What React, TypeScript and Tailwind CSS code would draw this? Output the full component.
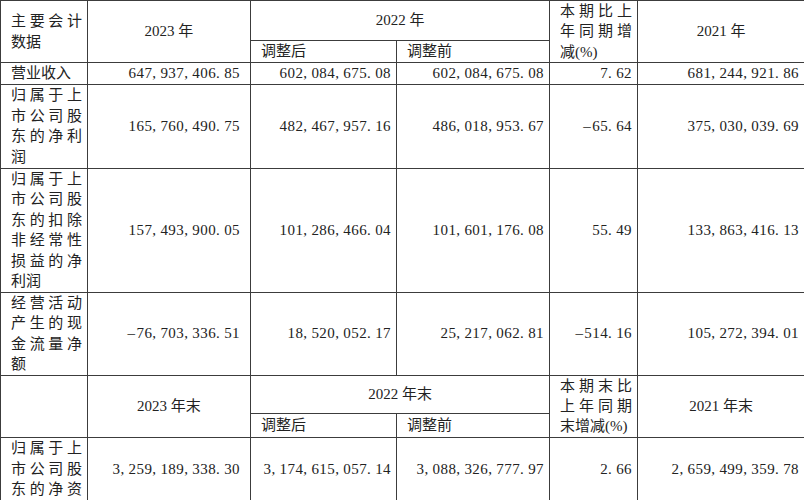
import React from 'react';

const cell = 'border border-[#3c3c3c] p-0 align-middle';

// SimSun-like numbers: digits slightly tracked, punctuation padded to half-width
const Num: React.FC<{ v: string }> = ({ v }) => (
  <span className="tracking-[0.4px]">
    {v.split('').map((c, i) =>
      /[0-9]/.test(c) ? c : c === '-' ? (
        <span key={i} className="inline-block w-[10px] text-center">–</span>
      ) : (
        <span key={i} className="mr-[4px]">{c}</span>
      )
    )}
  </span>
);

// Column labels: full CJK lines spread across the cell, short lines left as they are
const Label: React.FC<{ lines: string[] }> = ({ lines }) => (
  <div>
    {lines.map((l, i) =>
      lines.length > 1 && l.length === 4 && !l.includes('(') ? (
        <div key={i} className="flex justify-between">
          {[...l].map((c, j) => (
            <span key={j}>{c}</span>
          ))}
        </div>
      ) : (
        <div key={i}>{l}</div>
      )
    )}
  </div>
);

const rows = [
  { h: 'h-[21px]', label: ['营业收入'], v: ['647,937,406.85', '602,084,675.08', '602,084,675.08', '7.62', '681,244,921.86'] },
  { h: 'h-[84px]', label: ['归属于上', '市公司股', '东的净利', '润'], v: ['165,760,490.75', '482,467,957.16', '486,018,953.67', '-65.64', '375,030,039.69'] },
  { h: 'h-[124px]', label: ['归属于上', '市公司股', '东的扣除', '非经常性', '损益的净', '利润'], v: ['157,493,900.05', '101,286,466.04', '101,601,176.08', '55.49', '133,863,416.13'] },
  { h: 'h-[83px]', label: ['经营活动', '产生的现', '金流量净', '额'], v: ['-76,703,336.51', '18,520,052.17', '25,217,062.81', '-514.16', '105,272,394.01'] },
];

const DataRow: React.FC<{ h: string; label: string[]; v: string[] }> = ({ h, label, v }) => (
  <tr className={h}>
    <td className={`${cell} pl-[10px] pr-[5px]`}>
      <Label lines={label} />
    </td>
    {v.map((x, i) => (
      <td key={i} className={`${cell} text-right ${i === 0 ? 'pr-[10px]' : 'pr-[5px]'}`}>
        <Num v={x} />
      </td>
    ))}
  </tr>
);

export default function App() {
  return (
    <div className="w-[804px] h-[500px] bg-white overflow-hidden">
      <table className="w-[804px] table-fixed border-collapse text-[15px] leading-[20.4px] text-[#222] font-['Liberation_Serif','Noto_Sans_CJK_SC',serif]">
        <colgroup>
          <col className="w-[87px]" />
          <col className="w-[163px]" />
          <col className="w-[146px]" />
          <col className="w-[153px]" />
          <col className="w-[88px]" />
          <col className="w-[167px]" />
        </colgroup>
        <tbody>
          <tr className="h-[40px]">
            <td rowSpan={2} className={`${cell} pl-[10px] pr-[5px]`}>
              <Label lines={['主要会计', '数据']} />
            </td>
            <td rowSpan={2} className={`${cell} text-center`}>2023 年</td>
            <td colSpan={2} className={`${cell} text-center`}>2022 年</td>
            <td rowSpan={2} className={`${cell} pl-[10px] pr-[5px]`}>
              <Label lines={['本期比上', '年同期增', '减(%)']} />
            </td>
            <td rowSpan={2} className={`${cell} text-center`}>2021 年</td>
          </tr>
          <tr className="h-[22px]">
            <td className={`${cell} pl-[10px]`}>调整后</td>
            <td className={`${cell} pl-[10px]`}>调整前</td>
          </tr>
          {rows.map((r, i) => (
            <DataRow key={i} {...r} />
          ))}
          <tr className="h-[38px]">
            <td rowSpan={2} className={cell}></td>
            <td rowSpan={2} className={`${cell} text-center`}>2023 年末</td>
            <td colSpan={2} className={`${cell} text-center`}>2022 年末</td>
            <td rowSpan={2} className={`${cell} pl-[10px] pr-[5px]`}>
              <Label lines={['本期末比', '上年同期', '末增减(%)']} />
            </td>
            <td rowSpan={2} className={`${cell} text-center`}>2021 年末</td>
          </tr>
          <tr className="h-[23px]">
            <td className={`${cell} pl-[10px]`}>调整后</td>
            <td className={`${cell} pl-[10px]`}>调整前</td>
          </tr>
          <DataRow
            h="h-[63px]"
            label={['归属于上', '市公司股', '东的净资']}
            v={['3,259,189,338.30', '3,174,615,057.14', '3,088,326,777.97', '2.66', '2,659,499,359.78']}
          />
        </tbody>
      </table>
    </div>
  );
}
